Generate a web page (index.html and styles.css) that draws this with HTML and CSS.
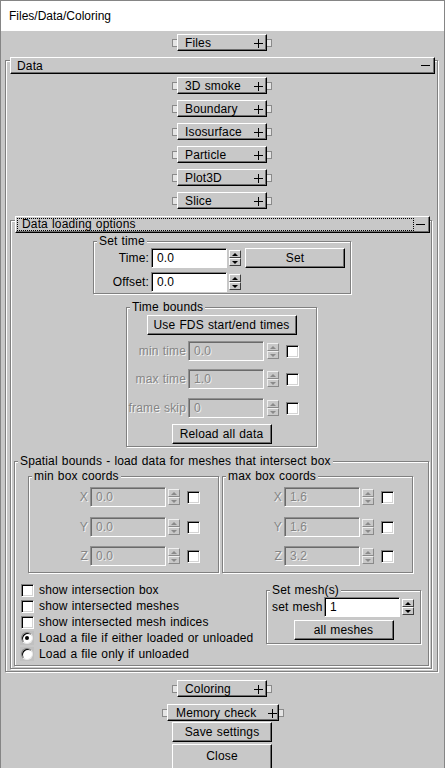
FILE: index.html
```html
<!DOCTYPE html>
<html>
<head>
<meta charset="utf-8">
<link rel="stylesheet" href="styles.css">
</head>
<body>
<div class="window">
  <div class="titlebar">Files/Data/Coloring</div>
  <div class="client">
    <div class="rwrap w-top"><span class="tab tl"></span><div class="rbtn"><span>Files</span><svg class="pm" width="9" height="9" viewBox="0 0 9 9"><path d="M0 4.5H9M4.5 0V9" stroke="#000" stroke-width="1"/></svg></div><span class="tab tr"></span></div>

    <div class="frame data">
      <div class="rhead hdata"><span>Data</span><span class="minus"></span></div>
      <div class="rwrap sub first"><span class="tab tl"></span><div class="rbtn"><span>3D smoke</span><svg class="pm" width="9" height="9" viewBox="0 0 9 9"><path d="M0 4.5H9M4.5 0V9" stroke="#000" stroke-width="1"/></svg></div><span class="tab tr"></span></div>
      <div class="rwrap sub"><span class="tab tl"></span><div class="rbtn"><span>Boundary</span><svg class="pm" width="9" height="9" viewBox="0 0 9 9"><path d="M0 4.5H9M4.5 0V9" stroke="#000" stroke-width="1"/></svg></div><span class="tab tr"></span></div>
      <div class="rwrap sub"><span class="tab tl"></span><div class="rbtn"><span>Isosurface</span><svg class="pm" width="9" height="9" viewBox="0 0 9 9"><path d="M0 4.5H9M4.5 0V9" stroke="#000" stroke-width="1"/></svg></div><span class="tab tr"></span></div>
      <div class="rwrap sub"><span class="tab tl"></span><div class="rbtn"><span>Particle</span><svg class="pm" width="9" height="9" viewBox="0 0 9 9"><path d="M0 4.5H9M4.5 0V9" stroke="#000" stroke-width="1"/></svg></div><span class="tab tr"></span></div>
      <div class="rwrap sub"><span class="tab tl"></span><div class="rbtn"><span>Plot3D</span><svg class="pm" width="9" height="9" viewBox="0 0 9 9"><path d="M0 4.5H9M4.5 0V9" stroke="#000" stroke-width="1"/></svg></div><span class="tab tr"></span></div>
      <div class="rwrap sub"><span class="tab tl"></span><div class="rbtn"><span>Slice</span><svg class="pm" width="9" height="9" viewBox="0 0 9 9"><path d="M0 4.5H9M4.5 0V9" stroke="#000" stroke-width="1"/></svg></div><span class="tab tr"></span></div>

      <div class="frame dlo">
        <div class="rhead hdlo"><span class="focus">Data loading options</span><span class="minus"></span></div>

        <div class="panel settime">
          <span class="ptitle">Set time</span>
          <div class="frow"><span class="lbl">Time:</span><span class="tb">0.0</span><span class="spin"><i></i><i></i></span><span class="btn setbtn">Set</span></div>
          <div class="frow r2"><span class="lbl">Offset:</span><span class="tb">0.0</span><span class="spin"><i></i><i></i></span></div>
        </div>

        <div class="panel tbounds">
          <span class="ptitle">Time bounds</span>
          <div class="btn fds">Use FDS start/end times</div>
          <div class="frow dis t1"><span class="lbl">min time</span><span class="tb">0.0</span><span class="spin"><i></i><i></i></span><span class="cb"></span></div>
          <div class="frow dis t2"><span class="lbl">max time</span><span class="tb">1.0</span><span class="spin"><i></i><i></i></span><span class="cb"></span></div>
          <div class="frow dis t3"><span class="lbl">frame skip</span><span class="tb">0</span><span class="spin"><i></i><i></i></span><span class="cb"></span></div>
          <div class="btn reload">Reload all data</div>
        </div>

        <div class="panel spatial">
          <span class="ptitle">Spatial bounds - load data for meshes that intersect box</span>
          <div class="boxes">
            <div class="panel coord">
              <span class="ptitle">min box coords</span>
              <div class="frow dis"><span class="lbl">X</span><span class="tb">0.0</span><span class="spin"><i></i><i></i></span><span class="cb"></span></div>
              <div class="frow dis c2"><span class="lbl">Y</span><span class="tb">0.0</span><span class="spin"><i></i><i></i></span><span class="cb"></span></div>
              <div class="frow dis c3"><span class="lbl">Z</span><span class="tb">0.0</span><span class="spin"><i></i><i></i></span><span class="cb"></span></div>
            </div>
            <div class="panel coord">
              <span class="ptitle">max box coords</span>
              <div class="frow dis"><span class="lbl">X</span><span class="tb">1.6</span><span class="spin"><i></i><i></i></span><span class="cb"></span></div>
              <div class="frow dis c2"><span class="lbl">Y</span><span class="tb">1.6</span><span class="spin"><i></i><i></i></span><span class="cb"></span></div>
              <div class="frow dis c3"><span class="lbl">Z</span><span class="tb">3.2</span><span class="spin"><i></i><i></i></span><span class="cb"></span></div>
            </div>
          </div>
          <div class="lower">
            <div class="opts">
              <div class="opt"><span class="cb"></span>show intersection box</div>
              <div class="opt"><span class="cb"></span>show intersected meshes</div>
              <div class="opt"><span class="cb"></span>show intersected mesh indices</div>
              <div class="opt"><span class="rwell"><span class="radio on"></span></span>Load a file if either loaded or unloaded</div>
              <div class="opt"><span class="rwell"><span class="radio"></span></span>Load a file only if unloaded</div>
            </div>
            <div class="panel setmesh">
              <span class="ptitle">Set mesh(s)</span>
              <div class="frow"><span class="lbl">set mesh</span><span class="tb">1</span><span class="spin"><i></i><i></i></span></div>
              <div class="btn allm">all meshes</div>
            </div>
          </div>
        </div>
      </div>
    </div>

    <div class="rwrap w-col"><span class="tab tl"></span><div class="rbtn"><span>Coloring</span><svg class="pm" width="9" height="9" viewBox="0 0 9 9"><path d="M0 4.5H9M4.5 0V9" stroke="#000" stroke-width="1"/></svg></div><span class="tab tr"></span></div>
    <div class="rwrap w-mem"><span class="tab tl"></span><div class="rbtn wide"><span>Memory check</span><svg class="pm" width="9" height="9" viewBox="0 0 9 9"><path d="M0 4.5H9M4.5 0V9" stroke="#000" stroke-width="1"/></svg></div><span class="tab tr"></span></div>
    <div class="btn bot save">Save settings</div>
    <div class="btn bot close">Close</div>
  </div>
</div>
</body>
</html>
```

FILE: styles.css
```css
* { box-sizing: border-box; }
html, body { margin: 0; padding: 0; }
body {
  font-family: "Liberation Sans", Arial, sans-serif;
  font-size: 12px;
  line-height: 14px;
  letter-spacing: 0.15px;
  word-spacing: 0.6px;
  color: #000;
  background: #c8c8c8;
}
.window {
  width: 445px;
  height: 768px;
  border: 1px solid #858585;
  border-bottom: 0;
  overflow: hidden;
  display: flex;
  flex-direction: column;
  background: #c8c8c8;
}
.titlebar {
  flex: none;
  height: 30px;
  background: #fff;
  padding: 8px 0 0 8px;
  letter-spacing: 0;
  word-spacing: 0;
}
.client {
  flex: 1;
  padding-top: 3px;
  display: flex;
  flex-direction: column;
  align-items: flex-start;
}

/* rollout buttons */
.rwrap { display: flex; align-items: center; height: 17px; flex: none; }
.w-top { margin-left: 171px; }
.sub { margin-left: 166px; margin-top: 6px; }
.sub.first { margin-top: 3px; }
.w-col { margin-left: 171px; margin-top: 8px; }
.w-mem { margin-left: 161px; margin-top: 7px; }
.tab {
  width: 5px;
  height: 8px;
  background: #e4e4e4;
  border: 1px solid #8a8a8a;
}
.tab.tl { border-right: 0; }
.tab.tr { border-left: 0; }
.rbtn {
  width: 90px;
  height: 17px;
  border: 1px solid;
  border-color: #fff #000 #000 #fff;
  box-shadow: inset -1px -1px 0 #6e6e6e;
  display: flex;
  align-items: center;
  justify-content: space-between;
  padding: 0 3px 0 7px;
  white-space: nowrap;
}
.rbtn.wide { width: 112px; padding-left: 8px; padding-right: 1px; }
.pm { display: block; margin-top: 1px; flex: none; }

/* etched frames */
.frame, .panel {
  border: 1px solid #808080;
  box-shadow: inset 1px 1px 0 #fff, 1px 1px 0 #fff;
}
.frame {
  display: flex;
  flex-direction: column;
  align-items: flex-start;
  flex: none;
}
.data { width: 433px; margin: 9px 0 0 4px; padding-bottom: 2px; }
.dlo { width: 422px; margin: 11px 0 0 4px; padding-bottom: 2px; }

.rhead {
  height: 17px;
  border: 1px solid;
  border-color: #fff #000 #000 #fff;
  box-shadow: inset -1px -1px 0 #6e6e6e;
  background: #c8c8c8;
  display: flex;
  align-items: center;
  justify-content: space-between;
  padding: 0 4px 0 6px;
  flex: none;
}
.hdata { width: 425px; margin: -4px 0 0 4px; }
.hdlo { width: 415px; margin: -5px 0 0 4px; padding-left: 1px; }
.minus { width: 9px; height: 1px; background: #000; }
.focus {
  width: 397px;
  height: 13px;
  border: 1px dotted #000;
  padding-left: 4px;
  line-height: 11px;
}

.panel { position: relative; flex: none; }
.ptitle {
  position: absolute;
  top: -8px;
  left: 3px;
  padding: 0 2px;
  background: #c8c8c8;
  line-height: 14px;
  white-space: nowrap;
}

/* generic field row */
.frow { display: flex; align-items: center; height: 20px; }
.lbl { text-align: right; flex: none; white-space: nowrap; }
.tb {
  width: 76px;
  height: 20px;
  flex: none;
  border: 1px solid;
  border-color: #808080 #fff #fff #808080;
  box-shadow: inset 1px 1px 0 #000;
  background: #fff;
  padding: 2px 0 0 5px;
}
.spin {
  width: 12px;
  height: 16px;
  display: flex;
  flex-direction: column;
  flex: none;
  margin-left: 2px;
}
.spin i {
  flex: 1;
  border: 1px solid;
  border-color: #fff #404040 #404040 #fff;
  display: flex;
  align-items: center;
  justify-content: center;
}
.spin i::before {
  content: "";
  width: 0;
  height: 0;
  border-left: 3px solid transparent;
  border-right: 3px solid transparent;
}
.spin i:first-child::before { border-bottom: 3px solid #000; }
.spin i:last-child::before { border-top: 3px solid #000; }

.cb {
  width: 13px;
  height: 13px;
  flex: none;
  background: #fff;
  border: 1px solid;
  border-color: #808080 #fff #fff #808080;
  box-shadow: inset 1px 1px 0 #000, inset -1px -1px 0 #d4d4d4;
}
.rwell {
  width: 14px;
  height: 14px;
  flex: none;
  margin: 0 5px 0 -1px;
  background: #c0c0c0;
  display: flex;
  align-items: center;
  justify-content: center;
}
.radio {
  width: 12px;
  height: 12px;
  flex: none;
  border-radius: 50%;
  background: #fff;
  border: 1px solid;
  border-color: #808080 #e8e8e8 #e8e8e8 #808080;
  box-shadow: inset 1px 1px 0 #000;
  display: flex;
  align-items: center;
  justify-content: center;
}
.radio.on::after {
  content: "";
  width: 4px;
  height: 4px;
  border-radius: 50%;
  background: #000;
}

/* disabled */
.dis .lbl { color: #858585; text-shadow: 1px 1px 0 #f4f4f4; }
.dis .tb {
  background: #c8c8c8;
  color: #858585;
  text-shadow: 1px 1px 0 #f0f0f0;
  border-color: #909090 #fff #fff #909090;
  box-shadow: inset 1px 1px 0 #6a6a6a;
}
.dis .spin i { border-color: #f0f0f0 #8a8a8a #8a8a8a #f0f0f0; }
.dis .spin i:first-child::before { border-bottom-color: #8a8a8a; }
.dis .spin i:last-child::before { border-top-color: #8a8a8a; }

/* push buttons */
.btn {
  height: 20px;
  border: 1px solid;
  border-color: #fff #000 #000 #fff;
  box-shadow: inset -1px -1px 0 #6e6e6e;
  background: #c8c8c8;
  text-align: center;
  padding-top: 2px;
  flex: none;
  white-space: nowrap;
}

/* set time */
.settime { width: 258px; height: 53px; margin: 8px 0 0 82px; padding: 6px 0 1px 0; }
.settime .lbl { width: 55px; margin-right: 2px; }
.settime .r2 { margin-top: 4px; }
.setbtn { width: 100px; margin-left: 4px; }

/* time bounds */
.tbounds {
  width: 191px;
  height: 140px;
  margin: 13px 0 0 115px;
  padding: 7px 0 2px 0;
  display: flex;
  flex-direction: column;
  align-items: flex-start;
}
.fds { width: 150px; align-self: center; }
.tbounds .lbl { width: 59px; margin-right: 2px; }
.tbounds .spin { margin-left: 3px; }
.tbounds .cb { margin-left: 7px; }
.t1 { margin-top: 6px; }
.t2 { margin-top: 8px; }
.t3 { margin-top: 9px; }
.reload { width: 100px; margin-top: 6px; align-self: center; }

/* spatial */
.spatial { width: 415px; height: 205px; margin: 14px 0 0 3px; padding: 14px 0 3px 0; }
.boxes { display: flex; gap: 3px; padding-left: 13px; }
.coord { width: 191px; height: 97px; padding: 10px 0 6px 0; }
.coord .lbl { width: 59px; margin-right: 2px; }
.coord .cb { margin-left: 7px; }
.c2 { margin-top: 10px; }
.c3 { margin-top: 9px; }

.lower { display: flex; align-items: flex-start; margin-top: 9px; padding-left: 6px; }
.opts { flex: 1; }
.opt { height: 16px; display: flex; align-items: center; line-height: 16px; white-space: nowrap; }
.opt .cb { margin-right: 5px; }

.setmesh {
  width: 155px;
  height: 54px;
  margin: 8px 7px 0 0;
  padding: 6px 0 3px 0;
  display: flex;
  flex-direction: column;
}
.setmesh .frow { margin-left: 5px; }
.setmesh .lbl { width: 50px; margin-right: 2px; text-align: left; }
.allm { width: 100px; margin-top: 3px; align-self: center; }

/* bottom */
.bot { width: 100px; margin-left: 171px; }
.save { margin-top: 1px; }
.close { margin-top: 2px; height: 26px; padding-top: 4px; }
```
